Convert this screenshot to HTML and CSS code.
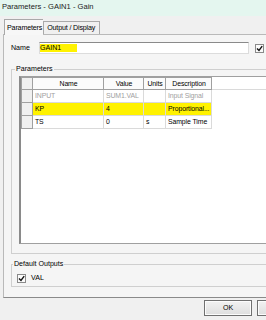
FILE: index.html
```html
<!DOCTYPE html>
<html>
<head>
<meta charset="utf-8">
<link rel="stylesheet" href="styles.css">
</head>
<body>
<div class="window">
  <div class="titlebar">Parameters - GAIN1 - Gain</div>
  <div class="tabs">
    <div class="tab tab-active">Parameters</div>
    <div class="tab">Output / Display</div>
  </div>
  <div class="panel">
    <div class="name-row">
      <span class="name-label">Name</span>
      <div class="name-input"><span class="hl">GAIN1</span></div>
      <span class="check"><svg width="7" height="7" viewBox="0 0 7 7"><path d="M1 3.5 L3 5.5 L6.2 1.2" fill="none" stroke="#111" stroke-width="1.4"/></svg></span>
    </div>
    <fieldset class="group group-params">
      <legend>Parameters</legend>
      <div class="grid">
        <table>
          <colgroup>
            <col class="c-rh"><col class="c-name"><col class="c-val"><col class="c-units"><col class="c-desc"><col>
          </colgroup>
          <thead>
            <tr><th class="rh"></th><th>Name</th><th>Value</th><th>Units</th><th>Description</th><th class="filler"></th></tr>
          </thead>
          <tbody>
            <tr class="disabled"><td class="rh"></td><td>INPUT</td><td>SUM1.VAL</td><td></td><td>Input Signal</td><td class="filler"></td></tr>
            <tr class="current"><td class="rh"></td><td>KP</td><td>4</td><td></td><td>Proportional...</td><td class="filler"></td></tr>
            <tr><td class="rh"></td><td>TS</td><td>0</td><td>s</td><td>Sample Time</td><td class="filler"></td></tr>
          </tbody>
        </table>
      </div>
    </fieldset>
    <fieldset class="group group-out">
      <legend>Default Outputs</legend>
      <div class="out-row">
        <span class="check"><svg width="7" height="7" viewBox="0 0 7 7"><path d="M1 3.5 L3 5.5 L6.2 1.2" fill="none" stroke="#111" stroke-width="1.4"/></svg></span>
        <span>VAL</span>
      </div>
    </fieldset>
  </div>
  <div class="footer">
    <div class="btn">OK</div>
    <div class="btn"></div>
  </div>
</div>
</body>
</html>
```
FILE: styles.css
```css
html, body {
  margin: 0;
  padding: 0;
}
body {
  width: 266px;
  height: 320px;
  overflow: hidden;
  background: #f0f0f0;
  font-family: "Liberation Sans", Arial, sans-serif;
  font-size: 7.1px;
  color: #000;
}
.window {
  width: 330px;
}
.titlebar {
  height: 16px;
  line-height: 14px;
  padding-left: 2px;
  background: #e4f6ef;
  font-size: 7.6px;
  color: #222;
}
.tabs {
  display: flex;
  align-items: flex-end;
  padding-left: 4px;
  margin-top: 3px;
  height: 15px;
}
.tab {
  height: 12px;
  line-height: 12px;
  padding: 0 4px 0 3px;
  border: 1px solid #a9a9a9;
  border-bottom: none;
  background: #f0f0f0;
  letter-spacing: -0.15px;
}
.tab-active {
  height: 15px;
  line-height: 16px;
  padding: 0 1px 0 2px;
  background: #f7f7f7;
  margin-bottom: -1px;
  position: relative;
  z-index: 1;
  border-right: none;
}
.panel {
  margin-left: 3px;
  border: 1px solid #b9b9b9;
  border-bottom-color: #8a8a8a;
  background: #f5f5f5;
  padding: 7px 0 7px 7px;
  height: 248px;
}
.name-row {
  display: flex;
  align-items: center;
  height: 12px;
}
.name-label {
  width: 28px;
}
.name-input {
  width: 208px;
  height: 10px;
  border: 1px solid #dcdcdc;
  border-top-color: #8a8a8a;
  background: #fff;
  display: flex;
  align-items: center;
}
.hl {
  background: #fff200;
  width: 37px;
  height: 8px;
  line-height: 9px;
}
.check {
  width: 7px;
  height: 7px;
  border: 1px solid #8a8a8a;
  background: #fafafa;
  display: flex;
  align-items: center;
  justify-content: center;
}
.name-row .check {
  margin-left: 6px;
}
.group {
  margin: 0;
  border: 1px solid #cfcfcf;
  min-width: 0;
}
.group legend {
  padding: 0 1px;
  margin-left: -4px;
  line-height: 9px;
}
.group-params {
  margin-top: 11px;
  padding: 2px 0 9px 7px;
}
.grid {
  height: 166px;
  border: 1px solid #a0a0a0;
  border-left: 2px solid #8a8a8a;
  background: #fff;
  overflow: hidden;
}
table {
  border-collapse: collapse;
  table-layout: fixed;
  width: 300px;
  font-size: 6.9px;
  letter-spacing: -0.1px;
}
.c-rh { width: 11px; }
.c-name { width: 71px; }
.c-val { width: 40px; }
.c-units { width: 22px; }
.c-desc { width: 46px; }
th, td {
  padding: 0 1px 0 2px;
  height: 12px;
  line-height: 12px;
  white-space: nowrap;
  overflow: hidden;
  font-weight: normal;
  text-align: left;
}
th {
  height: 11px;
  line-height: 11px;
  text-align: center;
  border: 1px solid #a0a0a0;
  background: #fbfbfb;
}
td {
  border: 1px solid #dadada;
}
.rh {
  background: #f0f0f0;
  border: 1px solid #a0a0a0;
}
th.filler, td.filler {
  border: none;
  background: #fff;
}
th.filler {
  border-bottom: 1px solid #dadada;
}
.disabled td {
  color: #a0a0a0;
}
.current td {
  background: #fff200;
}
.current td.rh {
  background: linear-gradient(90deg, #f0f0f0 0 10px, #fff200 10px);
}
.current td.filler {
  background: #fff;
}
.group-out {
  margin-top: 6px;
  padding: 4px 0 3px 5px;
}
.out-row {
  display: flex;
  align-items: center;
  gap: 5px;
  height: 10px;
}
.footer {
  display: flex;
  gap: 5px;
  padding: 2px 0 0 204px;
}
.btn {
  width: 46px;
  height: 14px;
  line-height: 14px;
  text-align: center;
  border: 1px solid #707070;
  background: linear-gradient(#f2f2f2, #dedede);
  box-shadow: inset 0 0 0 1px #fcfcfc;
}
```
